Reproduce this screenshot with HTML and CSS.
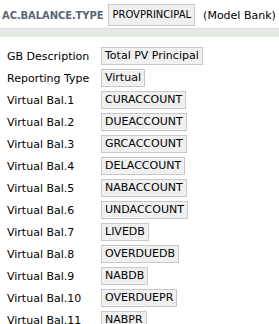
FILE: index.html
```html
<!DOCTYPE html>
<html lang="en">
<head>
  <meta charset="UTF-8">
  <title>AC.BALANCE.TYPE</title>
  <link rel="stylesheet" href="styles.css">
</head>
<body>
  <div class="header">
    <span class="app">AC.BALANCE.TYPE</span>
    <span class="field big">PROVPRINCIPAL</span>
    <span class="note">(Model Bank)</span>
  </div>
  <div class="band"></div>

  <table class="record">
    <tr><td class="label">GB Description</td><td><span class="field">Total PV Principal</span></td></tr>
    <tr><td class="label">Reporting Type</td><td><span class="field">Virtual</span></td></tr>
    <tr><td class="label">Virtual Bal.1</td><td><span class="field">CURACCOUNT</span></td></tr>
    <tr><td class="label">Virtual Bal.2</td><td><span class="field">DUEACCOUNT</span></td></tr>
    <tr><td class="label">Virtual Bal.3</td><td><span class="field">GRCACCOUNT</span></td></tr>
    <tr><td class="label">Virtual Bal.4</td><td><span class="field">DELACCOUNT</span></td></tr>
    <tr><td class="label">Virtual Bal.5</td><td><span class="field">NABACCOUNT</span></td></tr>
    <tr><td class="label">Virtual Bal.6</td><td><span class="field">UNDACCOUNT</span></td></tr>
    <tr><td class="label">Virtual Bal.7</td><td><span class="field">LIVEDB</span></td></tr>
    <tr><td class="label">Virtual Bal.8</td><td><span class="field">OVERDUEDB</span></td></tr>
    <tr><td class="label">Virtual Bal.9</td><td><span class="field">NABDB</span></td></tr>
    <tr><td class="label">Virtual Bal.10</td><td><span class="field">OVERDUEPR</span></td></tr>
    <tr><td class="label">Virtual Bal.11</td><td><span class="field">NABPR</span></td></tr>
  </table>
</body>
</html>
```

FILE: styles.css
```css
body {
  margin: 0;
  padding: 0;
  background: #fff;
  font-family: 'DejaVu Sans', sans-serif;
  font-size: 11px;
  color: #000;
  overflow: hidden;
}

.header {
  display: flex;
  align-items: center;
  padding: 4px 0 0 2px;
  white-space: nowrap;
}

.app {
  font-weight: bold;
  font-size: 10px;
  letter-spacing: -0.1px;
  color: #5b6673;
  margin-right: 5px;
}

.note {
  margin-left: 8px;
}

.field {
  display: inline-block;
  padding: 1px 3px;
  background: #f0f0f0;
  border: 1px solid #c8c8c8;
  line-height: 14px;
}

.field.big {
  padding: 3px 3px;
  font-size: 10px;
}

.band {
  height: 8px;
  margin-top: 2px;
  background: #e4e9e4;
  border-top: 1px solid #d8ddd8;
}

.record {
  border-collapse: collapse;
  margin-top: 9px;
}

.record td {
  padding: 0 0 2px 0;
  height: 20px;
}

.label {
  padding-left: 7px !important;
  width: 94px;
}
```
